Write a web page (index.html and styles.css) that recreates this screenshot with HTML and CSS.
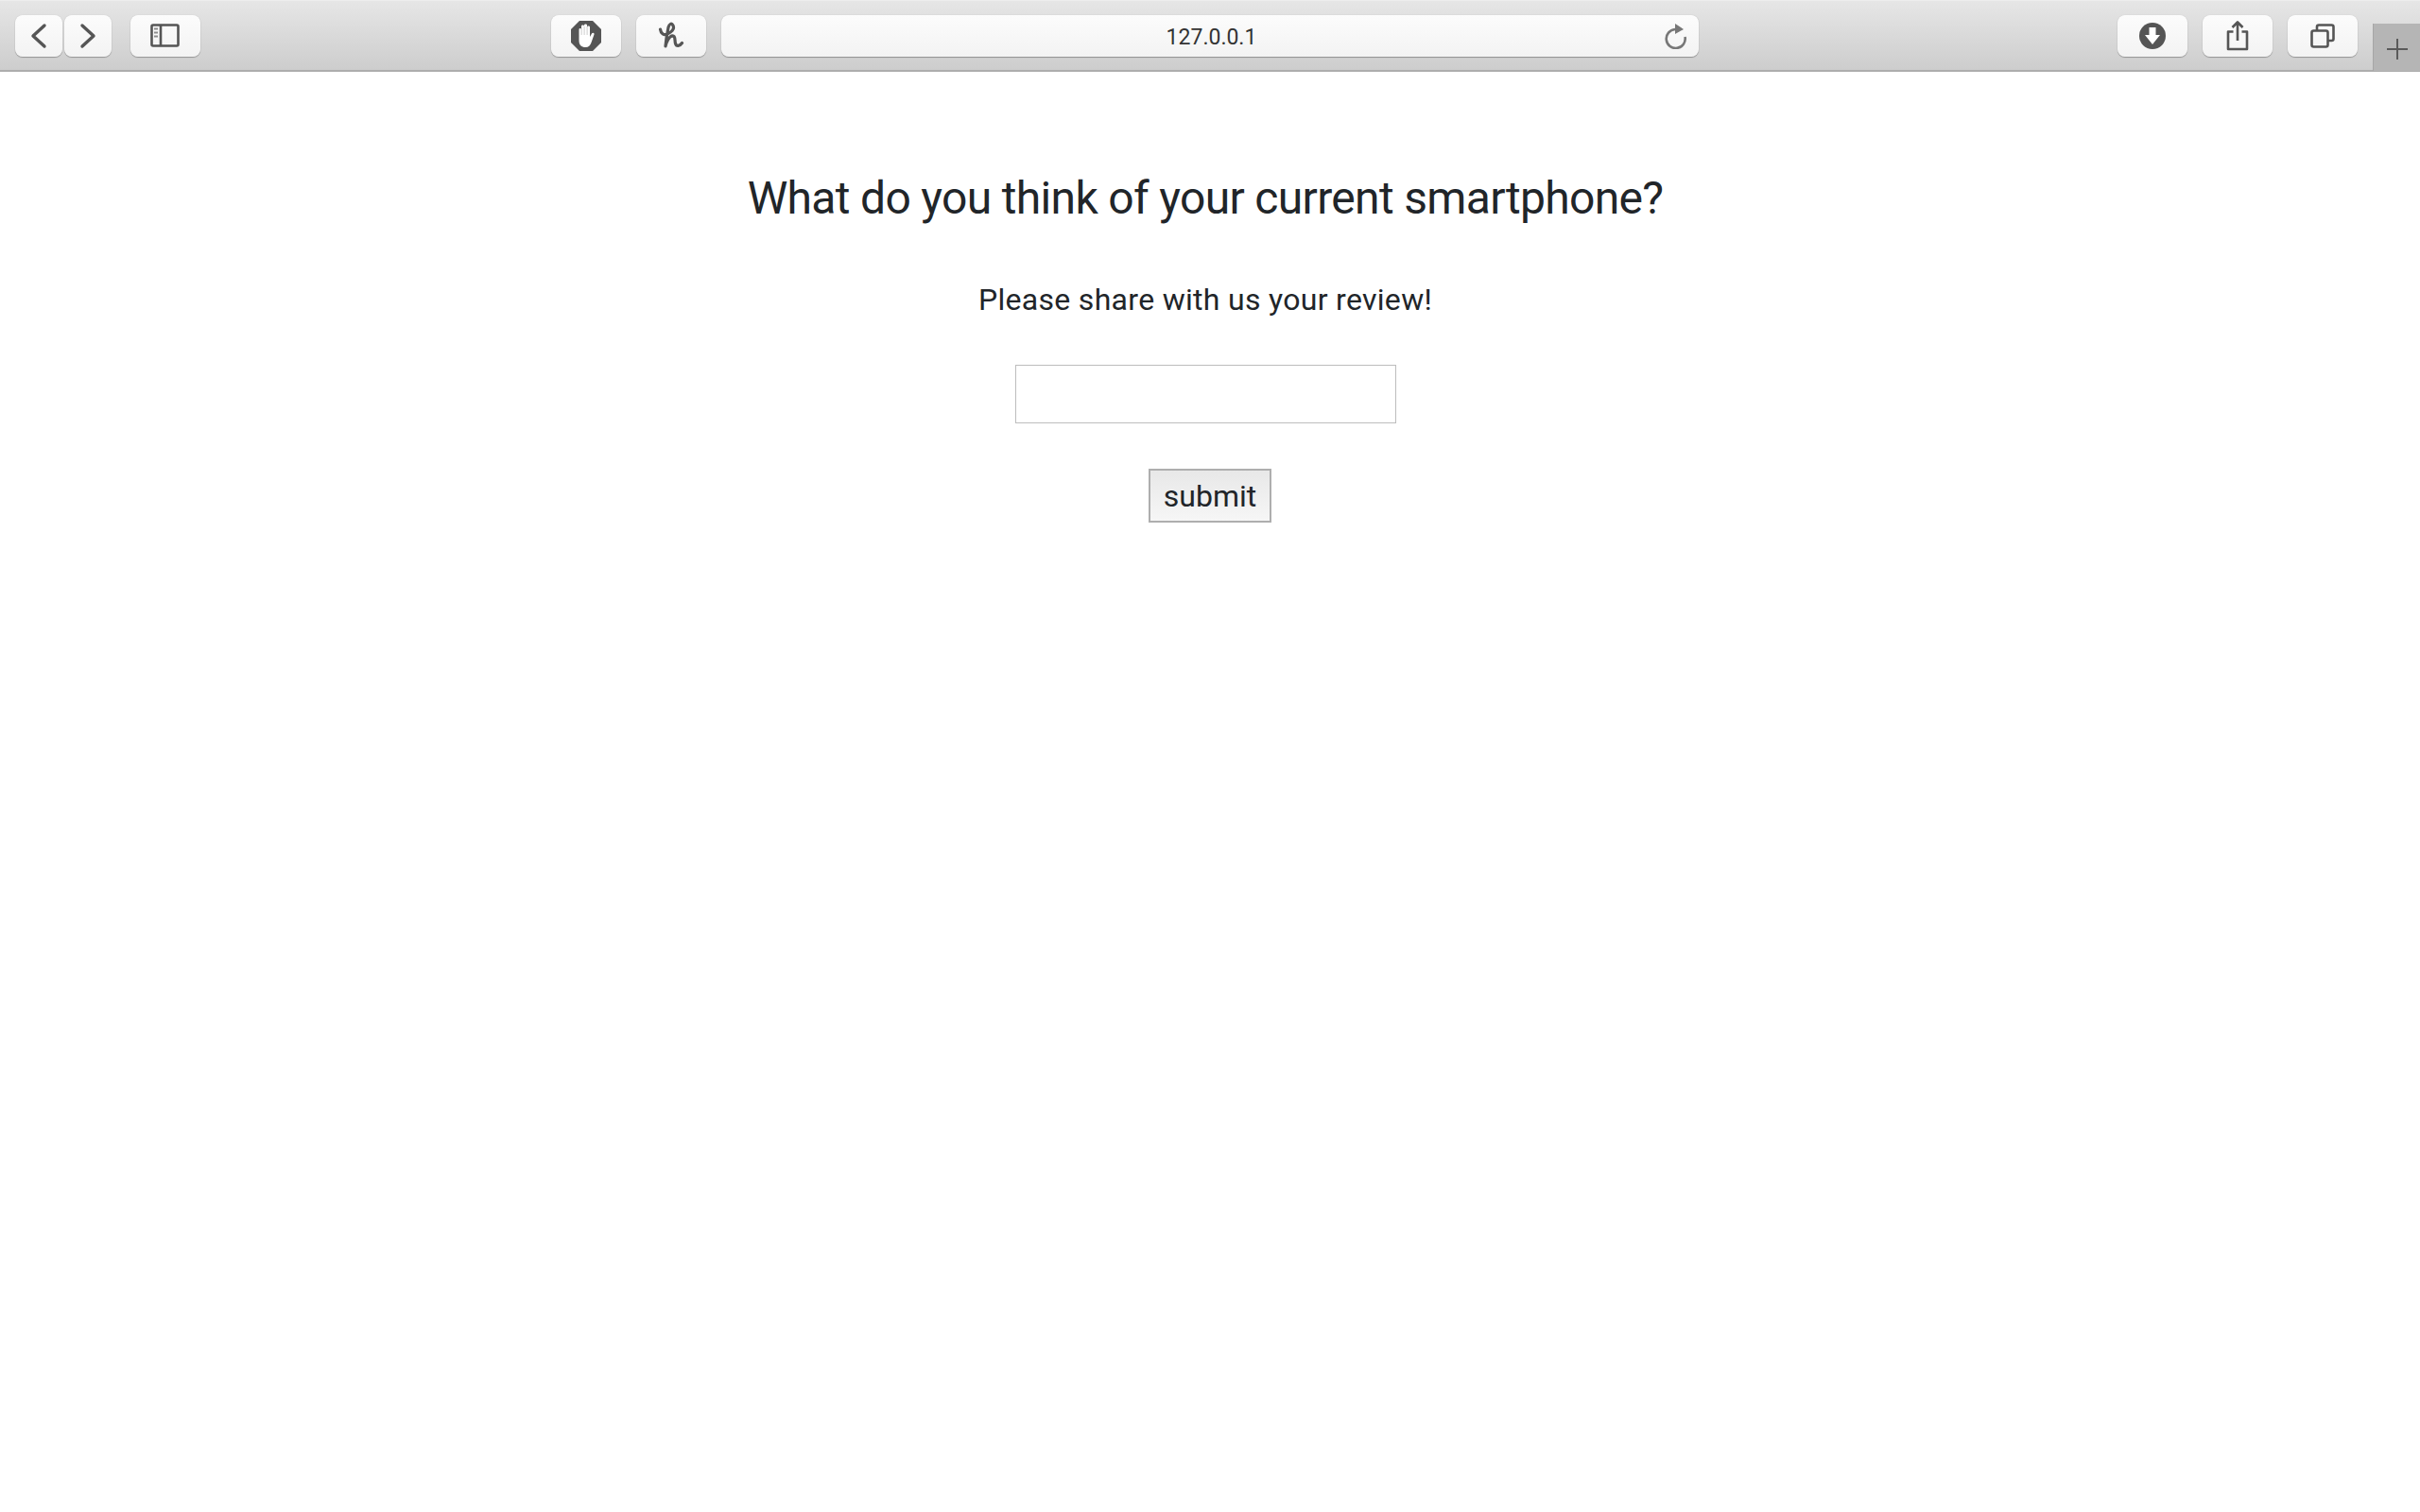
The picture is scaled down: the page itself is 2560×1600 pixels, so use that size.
FILE: index.html
```html
<!DOCTYPE html>
<html lang="en">
<head>
    <meta charset="UTF-8">
    <title>127.0.0.1</title>
    <link rel="stylesheet" href="styles.css">
</head>
<body>
<div class="toolbar">
    <div class="nav">
        <span class="btn btn-nav">
            <svg width="24" height="30" viewBox="0 0 24 30"><path class="line" d="M18 4 L6 15 L18 26"/></svg>
        </span>
        <span class="btn btn-nav">
            <svg width="24" height="30" viewBox="0 0 24 30"><path class="line" d="M6 4 L18 15 L6 26"/></svg>
        </span>
    </div>
    <span class="btn btn-sidebar">
        <svg width="32" height="26" viewBox="0 0 32 26">
            <rect class="thin" x="1.5" y="1.5" width="28" height="22" rx="1.5"/>
            <path class="thin" d="M11 1.5 V23.5"/>
            <path class="dots" d="M4 5.5 H8 M4 9.5 H8 M4 13.5 H8"/>
        </svg>
    </span>
    <span class="btn btn-block">
        <svg width="34" height="34" viewBox="0 0 34 34">
            <path class="fill" d="M10 1 H24 L33 10 V24 L24 33 H10 L1 24 V10 Z"/>
            <path class="hand" d="M9.500 10 C9.500 8.500 12 8.500 12 10 V6.500 C12 5 15 5 15 6.500 V5.500 C15 4 18 4 18 5.500 V7.500 C18 6 21 6 21 7.500 V18 L23 14.500 C24 13 26 13.800 25.500 15.500 L22.500 24 C21.500 27 19.500 29 16.500 29 C12 29 9.500 26.500 9.500 22 Z"/>
            <path class="finger-gap" d="M12.100 9 V16 M15.100 7 V16 M18.100 7 V16"/>
        </svg>
    </span>
    <span class="btn btn-honey">
        <svg width="28" height="30" viewBox="0 0 28 30"><path class="script" d="M2.500 8 C3 12 6 15 10 13 C14 11 18 8 16 4 C14.500 1 12 2 11 6 C10 11 8.500 20 8 26 C9 21 12 15 15.500 14.800 C19 14.800 17.500 20 18.500 23 C19.500 26.500 23 26 25.500 22.500"/></svg>
    </span>
    <div class="address">
        <span class="url">127.0.0.1</span>
        <svg class="reload" width="24" height="28" viewBox="0 0 24 28">
            <path class="reload-arc" d="M11 7 A10 10 0 1 0 21.500 15"/>
            <path class="reload-head" d="M11 1 L20 7 L11 12 Z"/>
        </svg>
    </div>
    <span class="btn btn-download">
        <svg width="30" height="30" viewBox="0 0 30 30">
            <circle class="fill" cx="15" cy="15" r="14"/>
            <path class="hand" d="M11.500 6 H18.500 V14 H23 L15 24 L7 14 H11.500 Z"/>
        </svg>
    </span>
    <span class="btn btn-share">
        <svg width="24" height="32" viewBox="0 0 24 32">
            <path class="thin" d="M7.500 11.500 H2 V30 H22 V11.500 H16.500"/>
            <path class="thin" d="M12 21 V1.500 M6.500 7 L12 1.500 L17.500 7"/>
        </svg>
    </span>
    <span class="btn btn-tabs">
        <svg width="26" height="26" viewBox="0 0 26 26">
            <rect class="thin" x="1.500" y="7.500" width="17" height="17" rx="2"/>
            <path class="thin" d="M7 7.500 V3.500 A2 2 0 0 1 9 1.500 H22.500 A2 2 0 0 1 24.500 3.500 V16 A2 2 0 0 1 22.500 18 H18.500"/>
        </svg>
    </span>
    <span class="new-tab">
        <svg width="24" height="24" viewBox="0 0 24 24"><path class="plus" d="M0 12 H22 M11 1 V23"/></svg>
    </span>
</div>

<div class="content">
    <h1 class="title">What do you think of your current smartphone?</h1>
    <p class="hint">Please share with us your review!</p>
    <form class="review">
        <input class="review-input" type="text">
        <input class="review-submit" type="submit" value="submit">
    </form>
</div>
</body>
</html>
```

FILE: styles.css
```css
*{
    padding: 0;
    margin: 0;
    box-sizing: border-box;
}
body{
    background-color: #fff;
    font-family: Roboto, "Liberation Sans", sans-serif;
    color: #212529;
}
.toolbar{
    height: 76px;
    padding: 16px 0 0 16px;
    display: flex;
    align-items: flex-start;
    background: linear-gradient(#e6e6e6, #cdcdcd);
    border-top: 1px solid #ededed;
    border-bottom: 2px solid #adadad;
    position: relative;
}
.nav{
    display: flex;
    gap: 2px;
    margin-right: 20px;
}
.btn{
    width: 74px;
    height: 44px;
    margin-top: -1px;
    display: flex;
    align-items: center;
    justify-content: center;
    flex: none;
    background: linear-gradient(#fcfcfc, #f3f3f3);
    border-radius: 8px;
    box-shadow: 0 1px 1px rgba(0,0,0,.28), 0 0 1px rgba(0,0,0,.2);
}
.btn-nav{
    width: 50px;
}
.btn-block{
    margin-left: 371px;
}
.btn-honey{
    margin-left: 16px;
}
.btn-download{
    margin-left: 443px;
}
.btn-share,
.btn-tabs{
    margin-left: 16px;
}
.address{
    width: 1034px;
    height: 44px;
    margin: -1px 0 0 16px;
    padding-right: 12px;
    flex: none;
    display: flex;
    align-items: center;
    justify-content: flex-end;
    position: relative;
    background: linear-gradient(#fcfcfc, #f3f3f3);
    border-radius: 8px;
    box-shadow: 0 1px 1px rgba(0,0,0,.3), 0 0 1px rgba(0,0,0,.25);
}
.url{
    position: absolute;
    left: 3px;
    right: 0;
    top: 9px;
    text-align: center;
    font-size: 23px;
    line-height: 29px;
    color: #333;
}
.line{
    fill: none;
    stroke: #555;
    stroke-width: 3.4;
    stroke-linecap: round;
    stroke-linejoin: round;
}
.thin{
    fill: none;
    stroke: #555;
    stroke-width: 2.6;
    stroke-linejoin: round;
}
.dots{
    fill: none;
    stroke: #8c8c8c;
    stroke-width: 2;
}
.fill{
    fill: #555;
}
.hand{
    fill: #fff;
}
.finger-gap{
    fill: none;
    stroke: #aaa;
    stroke-width: .6;
}
.script{
    fill: none;
    stroke: #555;
    stroke-width: 3.2;
    stroke-linecap: round;
    stroke-linejoin: round;
}
.reload-arc{
    fill: none;
    stroke: #777;
    stroke-width: 2.6;
}
.reload-head{
    fill: #777;
}
.new-tab{
    position: absolute;
    right: 0;
    top: 24px;
    width: 50px;
    height: 50px;
    padding: 15px 0 0 14px;
    background-color: #b5b5b5;
    border-left: 1px solid #a6a6a6;
}
.plus{
    fill: none;
    stroke: #5a5a5a;
    stroke-width: 2;
}
.new-tab svg{
    display: block;
}
.content{
    padding: 105px 10px 0 0;
    text-align: center;
}
.title{
    font-size: 48px;
    font-weight: 400;
    line-height: 58px;
    letter-spacing: -0.67px;
    margin-bottom: 54px;
}
.hint{
    font-size: 32px;
    line-height: 48px;
    letter-spacing: 0.3px;
    margin-bottom: 45px;
}
.review{
    display: flex;
    flex-direction: column;
    align-items: center;
}
.review-input{
    width: 403px;
    height: 62px;
    border: 1px solid #bdbdbd;
    background-color: #fff;
    margin-bottom: 48px;
}
.review-submit{
    width: 130px;
    height: 57px;
    margin-left: 10px;
    font-family: Roboto, "Liberation Sans", sans-serif;
    font-size: 32px;
    color: #212529;
    border: 2px solid #aeaeae;
    background: linear-gradient(#e8e8e8, #f6f6f6);
}
```
